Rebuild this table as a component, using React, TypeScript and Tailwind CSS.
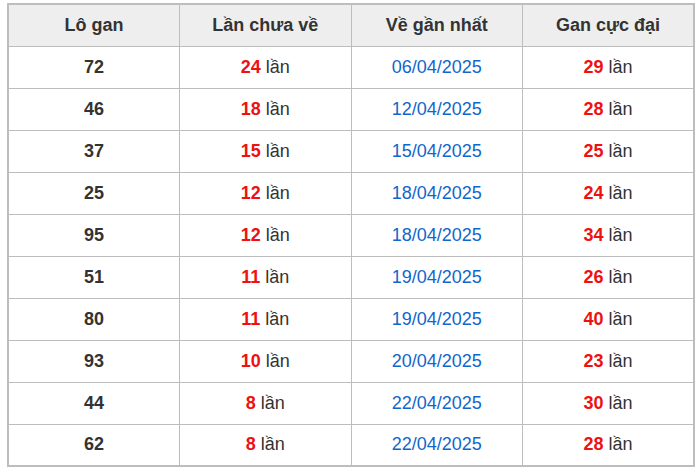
import React from "react";

// rows of the "lô gan" table
const rows = [
    { lo: "72", chua: 24, date: "06/04/2025", max: 29 },
    { lo: "46", chua: 18, date: "12/04/2025", max: 28 },
    { lo: "37", chua: 15, date: "15/04/2025", max: 25 },
    { lo: "25", chua: 12, date: "18/04/2025", max: 24 },
    { lo: "95", chua: 12, date: "18/04/2025", max: 34 },
    { lo: "51", chua: 11, date: "19/04/2025", max: 26 },
    { lo: "80", chua: 11, date: "19/04/2025", max: 40 },
    { lo: "93", chua: 10, date: "20/04/2025", max: 23 },
    { lo: "44", chua: 8, date: "22/04/2025", max: 30 },
    { lo: "62", chua: 8, date: "22/04/2025", max: 28 },
];

const headers = ["Lô gan", "Lần chưa về", "Về gần nhất", "Gan cực đại"];

export default function App() {
    return (
        <div className="w-[700px] h-[476px] bg-white pt-[3px] pl-[7px] font-['Liberation_Sans',Arial,sans-serif] text-[18px] text-[#333]">
            <table className="w-[688px] table-fixed border-collapse border-2 border-[#bdbdbd]">
                <thead>
                    <tr className="h-[42px] bg-[#eeeeee]">
                        {headers.map((h) => (
                            <th key={h} className="border border-[#bdbdbd] font-bold text-center">
                                {h}
                            </th>
                        ))}
                    </tr>
                </thead>
                <tbody>
                    {rows.map((r) => (
                        <tr key={r.lo} className="h-[42px]">
                            <td className="border border-[#bdbdbd] text-center font-bold">{r.lo}</td>
                            <td className="border border-[#bdbdbd] text-center">
                                <span className="font-bold text-[#ee1111]">{r.chua}</span> lần
                            </td>
                            <td className="border border-[#bdbdbd] text-center text-[#1166cc]">{r.date}</td>
                            <td className="border border-[#bdbdbd] text-center">
                                <span className="font-bold text-[#ee1111]">{r.max}</span> lần
                            </td>
                        </tr>
                    ))}
                </tbody>
            </table>
        </div>
    );
}
